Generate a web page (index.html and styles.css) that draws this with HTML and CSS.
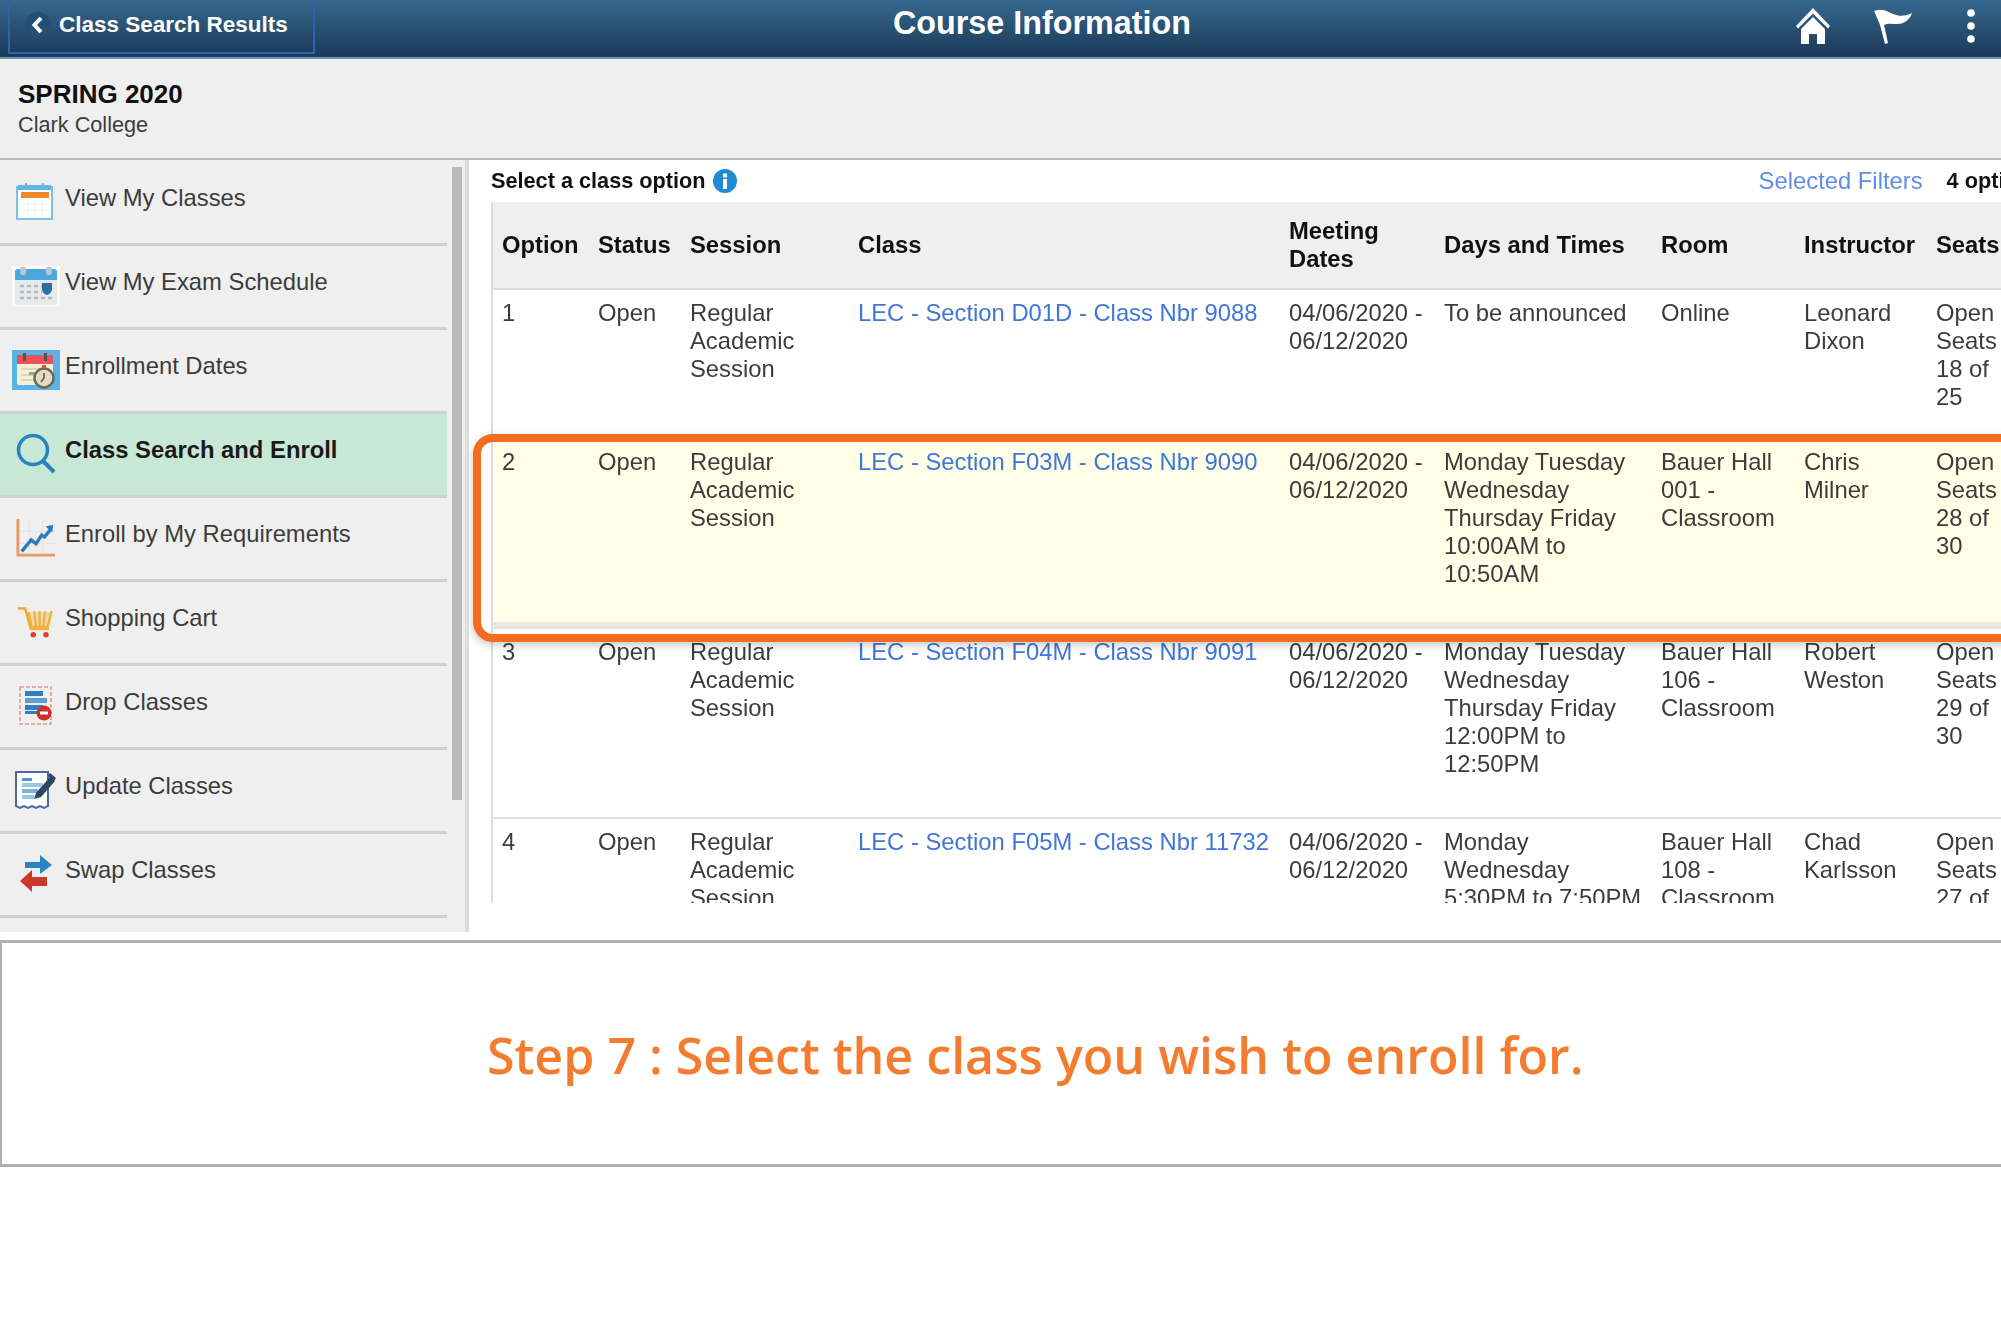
FILE: index.html
```html
<!DOCTYPE html>
<html lang="en">
<head>
<meta charset="utf-8">
<title>Course Information</title>
<link rel="stylesheet" href="styles.css">
</head>
<body>
<div class="screen">
  <header class="topbar">
    <div class="topbar-left">
      <a class="back">
        <span class="back-icon"><svg viewBox="0 0 24 24" width="24" height="24"><path d="M15 5 L8.5 12 L15 19" fill="none" stroke="#fff" stroke-width="4"/></svg></span>
        <span>Class Search Results</span>
      </a>
    </div>
    <h1 class="title">Course Information</h1>
    <div class="actions">
      <svg class="home" viewBox="0 0 36 38" width="36" height="38"><path d="M18 1 L35 19 L33 21.5 L18 6.5 L3 21.5 L1 19 Z" fill="#fff"/><path d="M6 22 L18 10 L30 22 V37 H22 V27 H14 V37 H6 Z" fill="#fff"/></svg>
      <svg class="flag" viewBox="0 0 40 36" width="40" height="36"><path d="M1 3 C8 0 14 3 20 6 C27 9 33 8 39 5 C37 11 32 16 24 16 C19 16 15 15 11 17 L15 35 L12 36 L7 17 C5 12 3 7 1 3 Z" fill="#fff"/></svg>
      <svg class="dots" viewBox="0 0 10 36" width="10" height="36"><circle cx="5" cy="5" r="3.8" fill="#fff"/><circle cx="5" cy="18" r="3.8" fill="#fff"/><circle cx="5" cy="31" r="3.8" fill="#fff"/></svg>
    </div>
  </header>

  <section class="term">
    <div class="term-name">SPRING 2020</div>
    <div class="term-school">Clark College</div>
  </section>

  <div class="content">
    <aside class="sidebar">
      <nav class="menu">
        <a class="item">
          <svg class="icon" viewBox="0 0 40 40"><rect x="1" y="5" width="35" height="32" fill="#fff" stroke="#7cc0ea" stroke-width="2"/><rect x="2" y="3" width="33" height="5" fill="#63b5e6"/><rect x="5" y="10" width="28" height="6" fill="#f08a28"/><path d="M5 22H33M5 28H33M12 17V35M19 17V35M26 17V35" stroke="#eee" stroke-width="1"/><rect x="9" y="1" width="2" height="5" fill="#63b5e6"/><rect x="26" y="1" width="2" height="5" fill="#63b5e6"/></svg>
          <span>View My Classes</span>
        </a>
        <a class="item">
          <svg class="icon" viewBox="0 0 48 40"><rect width="48" height="40" fill="#fafafa"/><rect x="3" y="3" width="42" height="36" rx="2" fill="#e7e9ea"/><path d="M3 14V6Q3 3 6 3H42Q45 3 45 6V14Z" fill="#4ba8dc"/><rect x="8" y="1" width="6" height="8" rx="2" fill="#b9c4cb"/><rect x="34" y="1" width="6" height="8" rx="2" fill="#b9c4cb"/><path d="M8 20H30M8 26H30M8 32H40" stroke="#b5babd" stroke-width="2.5" stroke-dasharray="4 3"/><path d="M30 17H40V23Q40 27 35 29Q30 27 30 23Z" fill="#2a6f9f"/></svg>
          <span>View My Exam Schedule</span>
        </a>
        <a class="item">
          <svg class="icon" viewBox="0 0 48 40"><rect width="48" height="40" fill="#58b4e4"/><rect x="5" y="5" width="36" height="30" rx="2" fill="#f6eed9"/><rect x="5" y="5" width="36" height="9" fill="#e8525a"/><rect x="11" y="3" width="3" height="8" fill="#555"/><rect x="32" y="3" width="3" height="8" fill="#555"/><path d="M9 19H32M9 25H26M9 30H26" stroke="#dcd5bf" stroke-width="2"/><rect x="17" y="22" width="6" height="3" fill="#7bbf5c"/><circle cx="32" cy="28" r="9.5" fill="#e5dcc4" stroke="#6d675a" stroke-width="2.4"/><path d="M32 23V28L29 32" fill="none" stroke="#6d675a" stroke-width="1.8"/><rect x="30" y="15" width="4" height="3" fill="#c85a4a"/></svg>
          <span>Enrollment Dates</span>
        </a>
        <a class="item active">
          <svg class="icon" viewBox="0 0 40 40"><circle cx="17" cy="16" r="14.5" fill="none" stroke="#2a82c2" stroke-width="3.5"/><path d="M27 27 L38 38" stroke="#2a82c2" stroke-width="4"/></svg>
          <span>Class Search and Enroll</span>
        </a>
        <a class="item">
          <svg class="icon" viewBox="0 0 42 42"><path d="M14 3V38M28 3V38M2 14H40M2 27H40" stroke="#e2e2e2" stroke-width="1"/><path d="M2 1V39H41" fill="none" stroke="#e79a62" stroke-width="3"/><path d="M6 35 L16 23 L21 27 L27 18 L30 20 L37 11" fill="none" stroke="#2a7bbd" stroke-width="3.5"/><path d="M31 9 L39 7 L38 15 Z" fill="#2a7bbd"/></svg>
          <span>Enroll by My Requirements</span>
        </a>
        <a class="item">
          <svg class="icon" viewBox="-4 -5 48 44"><path d="M0 2H8L12 6H39L34 24H14L8 4H0Z" fill="#f3b13d" opacity=".35"/><path d="M0 2H8L14 24H34" fill="none" stroke="#f0a52e" stroke-width="2.5"/><path d="M12 6L15 22M18 5L20 22M24 5V22M30 5L28 22M37 5L33 22" stroke="#f3b13d" stroke-width="2.5"/><rect x="14" y="21" width="20" height="5" fill="#f3b13d"/><circle cx="17" cy="31" r="3" fill="#d7402c"/><circle cx="31" cy="31" r="3" fill="#d7402c"/></svg>
          <span>Shopping Cart</span>
        </a>
        <a class="item">
          <svg class="icon" viewBox="0 0 40 40"><rect x="4" y="1" width="31" height="37" fill="none" stroke="#e2958e" stroke-width="1.5" stroke-dasharray="4 2"/><rect x="9" y="5" width="18" height="5" fill="#2f7fbe"/><rect x="9" y="12" width="22" height="5" fill="#5f9fd0"/><rect x="9" y="19" width="18" height="5" fill="#2f7fbe"/><rect x="9" y="25" width="12" height="3" fill="#2f7fbe"/><circle cx="28" cy="27" r="7.5" fill="#cf2f2a"/><rect x="24" y="25.5" width="8" height="3" fill="#fff"/></svg>
          <span>Drop Classes</span>
        </a>
        <a class="item">
          <svg class="icon" viewBox="0 0 42 40"><path d="M1 2H33V36L29 38L25 36L21 38L17 36L13 38L9 36L5 38L1 36Z" fill="#fff" stroke="#4c66a8" stroke-width="2"/><rect x="7" y="8" width="10" height="3" fill="#4a97cf"/><rect x="7" y="13" width="21" height="4" fill="#9ec6e4"/><rect x="7" y="19" width="16" height="4" fill="#7fb2da"/><rect x="7" y="25" width="12" height="4" fill="#9ec6e4"/><path d="M19 29 L21 23 L35 7 L40 11 L26 27 Z" fill="#2c4560"/><path d="M35 3 L41 8 L39 11 L33 6 Z" fill="#2c4560"/></svg>
          <span>Update Classes</span>
        </a>
        <a class="item">
          <svg class="icon" viewBox="0 0 40 40"><path d="M9 8H24V1L36 11L24 20V14H9Z" fill="#2a84c6"/><path d="M31 22H16V15L4 26L16 37V31H31Z" fill="#c93a2b" transform="translate(0 1)"/></svg>
          <span>Swap Classes</span>
        </a>
      </nav>
      <div class="scrollbar"></div>
    </aside>

    <main class="main">
      <div class="optionbar">
        <div class="optionbar-title">
          <span>Select a class option</span>
          <svg class="info" viewBox="0 0 24 24" width="24" height="24"><circle cx="12" cy="12" r="12" fill="#1f8bd6"/><rect x="10" y="10" width="4" height="10" fill="#fff"/><rect x="10" y="4.5" width="4" height="4" fill="#fff"/></svg>
        </div>
        <div class="optionbar-right">
          <a class="filters">Selected Filters</a>
          <span class="count">4 options</span>
        </div>
      </div>

      <div class="tablewrap">
        <table class="results">
          <colgroup>
            <col class="c1"><col class="c2"><col class="c3"><col class="c4"><col class="c5"><col class="c6"><col class="c7"><col class="c8"><col class="c9">
          </colgroup>
          <thead>
            <tr>
              <th>Option</th><th>Status</th><th>Session</th><th>Class</th><th>Meeting Dates</th><th>Days and Times</th><th>Room</th><th>Instructor</th><th>Seats</th>
            </tr>
          </thead>
          <tbody>
            <tr class="row-short">
              <td>1</td><td>Open</td><td>Regular Academic Session</td><td><a class="link">LEC - Section D01D - Class Nbr 9088</a></td><td>04/06/2020 - 06/12/2020</td><td>To be announced</td><td>Online</td><td>Leonard Dixon</td><td>Open Seats 18 of 25</td>
            </tr>
            <tr class="row-tall highlighted">
              <td>2</td><td>Open</td><td>Regular Academic Session</td><td><a class="link">LEC - Section F03M - Class Nbr 9090</a></td><td>04/06/2020 - 06/12/2020</td><td>Monday Tuesday Wednesday Thursday Friday 10:00AM to 10:50AM</td><td>Bauer Hall 001 - Classroom</td><td>Chris Milner</td><td>Open Seats 28 of 30</td>
            </tr>
            <tr class="row-tall">
              <td>3</td><td>Open</td><td>Regular Academic Session</td><td><a class="link">LEC - Section F04M - Class Nbr 9091</a></td><td>04/06/2020 - 06/12/2020</td><td>Monday Tuesday Wednesday Thursday Friday 12:00PM to 12:50PM</td><td>Bauer Hall 106 - Classroom</td><td>Robert Weston</td><td>Open Seats 29 of 30</td>
            </tr>
            <tr class="row-tall">
              <td>4</td><td>Open</td><td>Regular Academic Session</td><td><a class="link">LEC - Section F05M - Class Nbr 11732</a></td><td>04/06/2020 - 06/12/2020</td><td>Monday Wednesday 5:30PM to 7:50PM</td><td>Bauer Hall 108 - Classroom</td><td>Chad Karlsson</td><td>Open Seats 27 of 30</td>
            </tr>
          </tbody>
        </table>
      </div>
      <div class="callout"></div>
    </main>
  </div>

  <section class="step">
    <p class="step-text">Step 7 : Select the class you wish to enroll for.</p>
  </section>
</div>
</body>
</html>
```

FILE: styles.css
```css
* { box-sizing: border-box; }

html, body {
  margin: 0;
  height: 100%;
  background: #fff;
  overflow: hidden;
}

.screen {
  width: 2001px;
  height: 1329px;
  overflow: hidden;
  font-family: "Liberation Sans", Arial, sans-serif;
  font-size: 23.8px;
  line-height: 28px;
  color: #3c3c3c;
  filter: blur(0.7px);
}

/* top bar */
.topbar {
  height: 59px;
  display: grid;
  grid-template-columns: 893px auto 1fr;
  align-items: start;
  background: linear-gradient(#37688f, #1a3957);
  border-bottom: 2px solid #6d93b8;
}

.topbar-left { padding-left: 8px; }

.back {
  width: 307px;
  height: 54px;
  display: flex;
  align-items: center;
  gap: 8px;
  padding: 0 0 2px 15px;
  border: 2px solid #2f64ad;
  border-top: 0;
  color: #fff;
  font-size: 22.5px;
  font-weight: 700;
}

.back-icon {
  width: 26px;
  height: 26px;
  display: flex;
  align-items: center;
  justify-content: center;
  border-radius: 50%;
  background: #234e75;
}

.title {
  margin: 5px 0 0;
  font-size: 32.3px;
  line-height: 36px;
  font-weight: 700;
  color: #fff;
}

.actions {
  display: flex;
  align-items: center;
  justify-content: flex-end;
  gap: 42px;
  height: 52px;
  padding-right: 25px;
}

.flag { margin-right: 11px; }

/* term */
.term {
  height: 101px;
  padding: 20px 18px 0;
  background: #efefef;
  border-bottom: 2px solid #bbb;
}

.term-name {
  font-size: 26px;
  line-height: 30px;
  font-weight: 700;
  color: #111;
}

.term-school {
  margin-top: 2px;
  font-size: 21.7px;
  line-height: 28px;
}

/* content */
.content {
  height: 772px;
  display: flex;
}

.sidebar {
  flex: 0 0 469px;
  display: flex;
  gap: 5px;
  overflow: hidden;
  background: #efefef;
  border-right: 4px solid #ddd;
}

.menu {
  flex: 0 0 447px;
  padding-top: 2px;
}

.item {
  height: 84px;
  display: flex;
  align-items: flex-start;
  gap: 5px;
  padding: 22px 0 0 12px;
  border-bottom: 3px solid #d0d0d0;
}

.item.active {
  background: #c8e8d6;
  font-weight: 700;
  color: #1a1a1a;
}

.icon {
  flex: none;
  width: 48px;
  height: 40px;
  margin-top: -2px;
}

.scrollbar {
  flex: 0 0 10px;
  height: 633px;
  margin-top: 7px;
  background: #bbb;
}

.main {
  flex: 1;
  min-width: 0;
  position: relative;
  overflow: hidden;
  padding-left: 22px;
}

.optionbar {
  height: 42px;
  display: flex;
  align-items: center;
  justify-content: space-between;
  margin-right: -42px;
}

.optionbar-title {
  display: flex;
  align-items: center;
  gap: 7px;
  font-size: 21.7px;
  font-weight: 700;
  color: #111;
}

.optionbar-right {
  display: flex;
  align-items: center;
  gap: 24px;
  white-space: nowrap;
}

.filters { color: #5f8de2; }

.count {
  font-size: 21.7px;
  font-weight: 700;
  color: #111;
}

.tablewrap {
  height: 701px;
  overflow: hidden;
}

.results {
  table-layout: fixed;
  border-collapse: collapse;
  width: 1534px;
  border-left: 2px solid #ddd;
}

.c1 { width: 96px; }
.c2 { width: 92px; }
.c3 { width: 168px; }
.c4 { width: 431px; }
.c5 { width: 155px; }
.c6 { width: 217px; }
.c7 { width: 143px; }
.c8 { width: 132px; }
.c9 { width: 100px; }

.results th {
  height: 87px;
  padding: 0 6px 0 10px;
  background: #efefef;
  border-bottom: 2px solid #ddd;
  text-align: left;
  vertical-align: middle;
  font-weight: 700;
  color: #111;
}

.results td {
  padding: 9px 6px 0 10px;
  vertical-align: top;
  line-height: 28.1px;
  border-bottom: 2px solid #e2e2e2;
}

.results th:first-child,
.results td:first-child { padding-left: 9px; }

.row-short td { height: 149px; }
.row-tall td { height: 190px; }
.highlighted td {
  background: #ffffe8;
  box-shadow: inset 0 -5px 0 #e8e8e2;
}

.link { color: #3f76d8; }

.callout {
  position: absolute;
  left: 4px;
  top: 274px;
  width: 1600px;
  height: 208px;
  border: 8px solid #f36c22;
  border-radius: 20px;
  box-shadow: 0 3px 8px rgba(0, 0, 0, 0.22);
}

/* step */
.step {
  height: 227px;
  margin-top: 8px;
  display: flex;
  align-items: center;
  justify-content: flex-start;
  padding: 2px 0 0 485px;
  border: 3px solid #b0b0b0;
  border-right: 0;
  border-left-width: 2px;
}

.step-text {
  margin: 0;
  font-family: "Open Sans", "Noto Sans", sans-serif;
  font-size: 50.1px;
  font-weight: 600;
  line-height: 60px;
  color: #f47c30;
  white-space: nowrap;
}
```
